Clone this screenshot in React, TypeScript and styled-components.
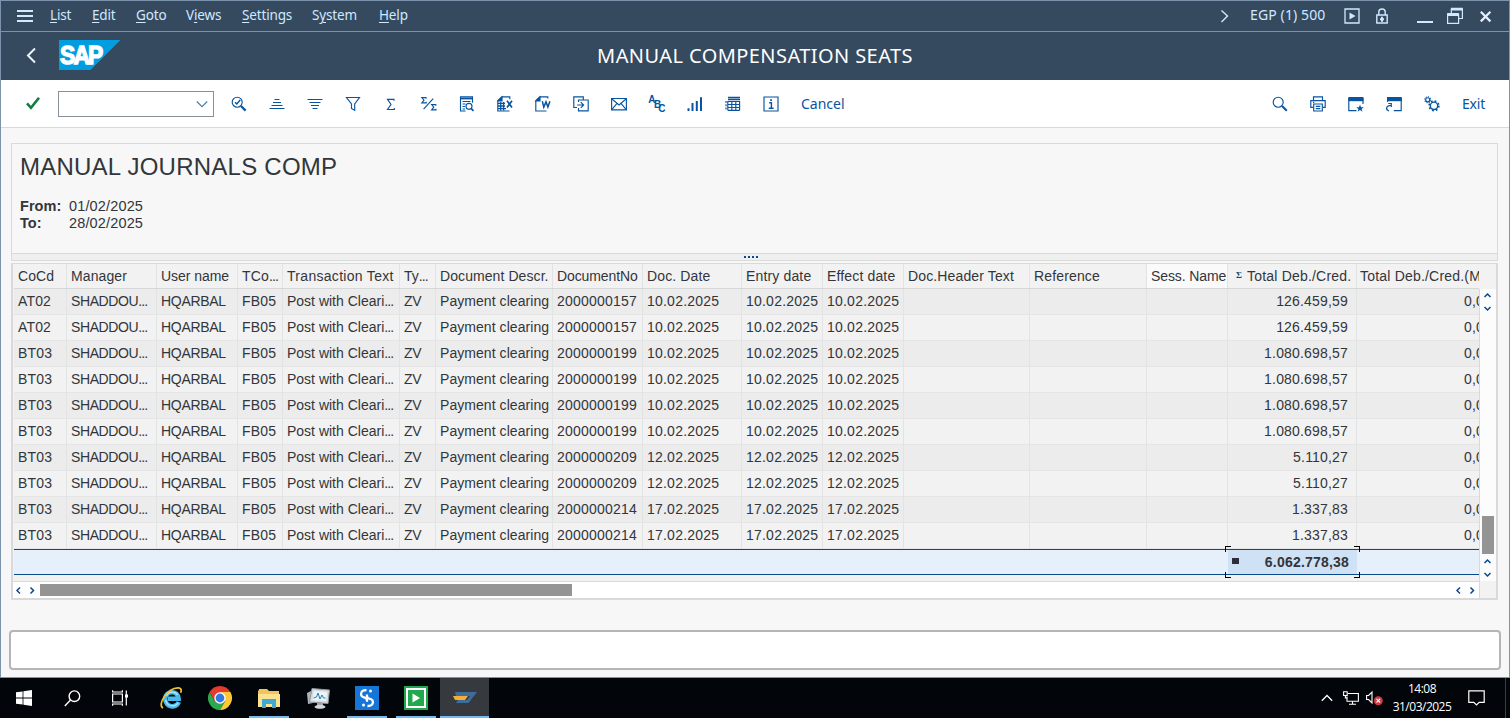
import React from 'react';
import styled, { createGlobalStyle, css } from 'styled-components';

const GlobalStyle = createGlobalStyle`
  * { box-sizing: border-box; }
  body { margin: 0; overflow: hidden; background: #f7f7f7; }
`;

const UI_FONT = `'Noto Sans', 'Open Sans', sans-serif`;
const GRID_FONT = `'Liberation Sans', Arial, sans-serif`;

const Screen = styled.div`
  width: 1510px;
  height: 718px;
  display: flex;
  flex-direction: column;
  font-family: ${UI_FONT};
`;

const Window = styled.div`
  height: 678px;
  display: flex;
  flex-direction: column;
  background: #f7f7f7;
  border: 1px solid #7b93ad;
`;

/* ---------- menu bar ---------- */

const MenuBar = styled.div`
  height: 31px;
  flex: none;
  display: flex;
  justify-content: space-between;
  background: #354a5f;
  border-bottom: 1px solid #7b93ad;
  color: #d1e8ff;
  font-size: 14px;
  line-height: 18px;
`;

const MenuLeft = styled.div`
  display: flex;
  align-items: center;
  padding: 0 0 2px 14px;
`;

const MenuItem = styled.span<{ $w: number; $ls?: number }>`
  width: ${(p) => p.$w}px;
  white-space: nowrap;
  font-size: 13.5px;
  letter-spacing: ${(p) => p.$ls ?? -0.15}px;
  u { text-underline-offset: 2px; text-decoration-thickness: 1px; }
`;

const MenuRight = styled.div`
  display: flex;
  align-items: center;
  padding: 0 14px 0 0;
`;

const SystemLabel = styled.span`
  width: 94px;
  margin-left: 19px;
  padding-bottom: 2px;
  letter-spacing: 0.12px;
  white-space: nowrap;
`;

const Glyph = styled.svg<{ $ml?: number }>`
  flex: none;
  display: block;
  overflow: visible;
  margin-left: ${(p) => p.$ml ?? 0}px;
`;

/* ---------- title bar ---------- */

const TitleBar = styled.div`
  height: 48px;
  flex: none;
  display: grid;
  grid-template-columns: 190px 1fr 190px;
  align-items: center;
  background: #354a5f;
`;

const Brand = styled.div`
  display: flex;
  align-items: center;
  padding: 0 0 2px 22px;
`;

const Title = styled.div`
  text-align: center;
  color: #fff;
  font-size: 20px;
  line-height: 26px;
  letter-spacing: 0.42px;
  white-space: nowrap;
`;

/* ---------- toolbar ---------- */

const Toolbar = styled.div`
  height: 48px;
  flex: none;
  display: flex;
  align-items: center;
  justify-content: space-between;
  background: #fff;
  border-bottom: 1px solid #d9d9d9;
  padding: 1px 24px 0 13px;
`;

const ToolGroup = styled.div`
  display: flex;
  align-items: center;
`;

const ToolButton = styled.button`
  width: 38px;
  height: 32px;
  padding: 0;
  border: 0;
  background: none;
  display: flex;
  align-items: center;
  justify-content: center;
`;

const TextButton = styled.button<{ $ls?: number; $ml?: number }>`
  border: 0;
  padding: 0;
  margin-left: ${(p) => p.$ml ?? 0}px;
  background: none;
  color: #0854a0;
  font: 14px/18px ${UI_FONT};
  letter-spacing: ${(p) => p.$ls ?? 0}px;
`;

const CommandField = styled.div`
  width: 156px;
  height: 26px;
  margin: 0 6px;
  border: 1px solid #89919a;
  background: #fff;
  display: flex;
  align-items: center;
  justify-content: flex-end;
  padding-right: 5px;
`;

/* ---------- content ---------- */

const Content = styled.main`
  flex: 1;
  display: flex;
  flex-direction: column;
  padding: 15px 8px 0 8px;
  font-family: ${GRID_FONT};
  color: #32363a;
`;

const Heading = styled.section`
  height: 111px;
  margin: 0 3px 0 2px;
  border: 1px solid #d9dbd9;
  padding: 8px 8px 0;
`;

const H1 = styled.h1`
  margin: 0;
  font-size: 24px;
  line-height: 30px;
  font-weight: 400;
  letter-spacing: 0.24px;
  white-space: nowrap;
`;

const Period = styled.dl`
  margin: 16px 0 0;
  display: grid;
  grid-template-columns: 49px 1fr;
  font-size: 14.5px;
  line-height: 17px;
  dt { font-weight: 700; letter-spacing: 0.05px; }
  dd { margin: 0; letter-spacing: 0.15px; }
`;

const Splitter = styled.div`
  height: 7px;
  margin: 0 3px 0 2px;
  background: #efefef;
  border: 1px solid #d9dbd9;
  border-top: 0;
  display: flex;
  justify-content: center;
  align-items: center;
  gap: 2px;
  padding-right: 8px;
`;

const Dot = styled.i`
  width: 2px;
  height: 2px;
  background: #0a4a8c;
`;

const Grid = styled.section`
  height: 337px;
  margin: 2px 3px 0 2px;
  border: 2px solid #d9d9d9;
  border-top-width: 1px;
  display: flex;
  flex-direction: column;
  background: #f2f2f2;
  font-size: 14px;
`;

const GridMain = styled.div`
  height: 317px;
  flex: none;
  display: flex;
`;

const Table = styled.div`
  width: 1466px;
  flex: none;
  overflow: hidden;
  padding-left: 1px;
`;

const columnTracks = [53, 90, 81, 45, 117, 36, 117, 90, 99, 81, 81, 126, 117, 81, 129, 122];

const Row = styled.div<{ $head?: boolean; $odd?: boolean }>`
  display: grid;
  grid-template-columns: ${columnTracks.map((w) => `${w}px`).join(' ')};
  height: ${(p) => (p.$head ? 25 : 26)}px;
  line-height: 24px;
  background: ${(p) => (p.$odd ? '#ececec' : '#f2f2f2')};
  border-bottom: 1px solid ${(p) => (p.$head ? '#d5d8d6' : '#e5e5e5')};
`;

const Cell = styled.div<{ $right?: boolean; $num?: boolean; $light?: boolean; $last?: boolean; $ls?: number }>`
  min-width: 0;
  overflow: hidden;
  white-space: nowrap;
  padding-left: 4px;
  border-right: 1px solid #e2e4e3;
  letter-spacing: ${(p) => p.$ls ?? (p.$num ? 0.22 : 0)}px;
  ${(p) => p.$light && css`background: #fafafa;`}
  ${(p) => p.$right && css`text-align: right; padding: 0 8px 0 0; letter-spacing: 0.18px;`}
  ${(p) => p.$last && css`border-right: 0; padding-left: 3px;`}
`;

const Dots = styled.span`
  letter-spacing: -0.9px;
`;

const ClippedAmount = styled.div`
  overflow: hidden;
  white-space: nowrap;
  padding-left: 107px;
  letter-spacing: 0.2px;
`;

const SumMark = styled.span`
  display: inline-block;
  width: 11px;
  margin-left: 4px;
  font: 700 9px 'Liberation Serif', serif;
  color: #0a4a8c;
  vertical-align: 3px;
`;

const TotalRow = styled.div`
  height: 26px;
  display: grid;
  grid-template-columns: 1214px 129px 122px;
  background: #e5f0fa;
  border-top: 1px solid #0a4a8c;
  border-bottom: 1px solid #0a4a8c;
`;

const TotalCell = styled.div`
  grid-column: 2;
  position: relative;
  background: #cfe1f5;
  display: flex;
  justify-content: space-between;
  align-items: center;
  padding: 0 8px 1px 4px;
  font-weight: 700;
  letter-spacing: 0.2px;
`;

const TotalMark = styled.i`
  width: 7px;
  height: 6px;
  margin-bottom: 1px;
  background: #2c2f3a;
`;

const Corner = styled.i<{ $top?: boolean; $left?: boolean }>`
  position: absolute;
  width: 6px;
  height: 6px;
  ${(p) => (p.$top ? 'top: -4px; border-top: 1px solid #000;' : 'bottom: -4px; border-bottom: 1px solid #000;')}
  ${(p) => (p.$left ? 'left: -3px; border-left: 1px solid #000;' : 'right: -3px; border-right: 1px solid #000;')}
`;

const VScroll = styled.div`
  width: 17px;
  margin-top: 25px;
  background: #fcfcfc;
  border-left: 1px solid #d9d9d9;
  display: flex;
  flex-direction: column;
  align-items: center;
  padding-right: 1px;
`;

const VThumb = styled.div`
  width: 12px;
  height: 38px;
  flex: none;
  margin: 201px 0 1px;
  background: #949494;
`;

const HScroll = styled.div`
  height: 17px;
  width: 1467px;
  background: #fff;
  border-top: 1px solid #d9d9d9;
  border-right: 1px solid #d9d9d9;
  display: flex;
  align-items: center;
`;

const HThumb = styled.div`
  width: 532px;
  height: 12px;
  margin-left: 1px;
  margin-right: auto;
  background: #949494;
`;

const StatusBar = styled.div`
  height: 40px;
  margin-top: 30px;
  border: 2px solid #b5b5b5;
  border-radius: 4px;
  background: #fff;
`;

/* ---------- taskbar ---------- */

const Taskbar = styled.footer`
  height: 40px;
  flex: none;
  background: #020509;
  display: flex;
  justify-content: space-between;
  color: #fff;
`;

const TaskGroup = styled.div`
  display: flex;
`;

const TaskSlot = styled.div<{ $w: number; $open?: boolean; $active?: boolean }>`
  width: ${(p) => p.$w}px;
  height: 40px;
  display: flex;
  align-items: center;
  justify-content: center;
  background: ${(p) =>
    p.$active
      ? 'linear-gradient(#76b9ed, #76b9ed) bottom / 100% 2px no-repeat, #363a3e'
      : p.$open
        ? 'linear-gradient(#76b9ed, #76b9ed) bottom / 40px 2px no-repeat'
        : 'none'};
`;

const Tray = styled.div`
  display: flex;
  align-items: center;
  padding-right: 4px;
`;

const Clock = styled.div`
  width: 68px;
  margin-left: 5px;
  text-align: center;
  font: 12px/18px 'Open Sans', sans-serif;
  letter-spacing: -0.5px;
  padding-bottom: 1px;
`;

const TrayEnd = styled.div`
  width: 1px;
  height: 40px;
  margin-left: 20px;
  background: #3c4043;
`;

/* ---------- icons ---------- */

const Icon = ({ children, size = 16 }: { children: React.ReactNode; size?: number }) => (
  <Glyph width={size} height={size} viewBox="0 0 16 16" fill="none" stroke="#0854a0" strokeWidth="1.15">
    {children}
  </Glyph>
);

const icons: Record<string, React.ReactNode> = {
  detail: (
    <>
      <circle cx="6.2" cy="6.2" r="5" />
      <path d="M4 6.2l1.8 1.8 3.4-4" strokeWidth="1.4" />
      <path d="M10 10l4.6 4.6" strokeWidth="2.2" />
    </>
  ),
  ascending: <path d="M5.5 3.5h5M4 6.5h8M2.5 9.5h11M.5 12.5h15" />,
  descending: <path d="M.5 3.5h15M2.5 6.5h11M4 9.5h8M5.5 12.5h5" />,
  filter: <path d="M1.5 1.5h13L9.7 8v6.3l-3.2-1.8V8z" />,
  sum: <path d="M11 4.700V3.400H4.500L8 8.500l-3.500 5h6.800v-1.400" />,
  subtotal: (
    <>
      <path d="M5 2.8V1.6H.8L3 4.2.8 6.9H5.2V5.7M14.8 9.8V8.6h-4.2l2.2 2.6-2.2 2.7H15v-1.2" strokeWidth="1.1" />
      <path d="M2.6 13.2L12.2 2.6" />
    </>
  ),
  preview: (
    <>
      <path d="M6.5 15H1.5V.8h12v6M3.5 5.5h8M3.5 8h3M3.5 10.5h2.5M3.5 13h2.5" />
      <path d="M1.5 2.5h12" strokeWidth="1.8" />
      <circle cx="10" cy="10.3" r="3" />
      <path d="M12.2 12.6l2.3 2.3" strokeWidth="1.7" />
    </>
  ),
  excel: (
    <>
      <path d="M12.5 15H.8V4.8L4.8.8h8v2.5" />
      <path d="M1 5L5 1v4z" fill="#0854a0" />
      <path d="M1 7.3h7M1 10h7M1 12.7h8M3.7 6v8.5M6.6 6v8.5" strokeWidth="1.3" />
      <path d="M10 4.800l5 6.800M15 4.800l-5 6.800" strokeWidth="1.7" />
    </>
  ),
  word: (
    <>
      <path d="M11.5 15H.8V4.8L4.8.8h8v1.7" />
      <path d="M1 5L5 1v4z" fill="#0854a0" />
      <path d="M7.3 5.3l1.5 5.8 2.2-5.2 1.9 5.2 2-5.8" strokeWidth="1.5" />
    </>
  ),
  localFile: (
    <>
      <path d="M4 11.5H.8V.8h9.5v3.500M5.500 6V4h9.700v10.800H5.500v-2.700" />
      <path d="M4.200 9h6M7.800 6.200l2.800 2.800-2.800 2.800" />
    </>
  ),
  mail: (
    <>
      <path d="M.6 2.500h14.800v11.400H.6z" />
      <path d="M1 3l7 6 7-6M1 13.400l5-6M15 13.400l-5-6" />
    </>
  ),
  chart: <path d="M1.500 12.200V15M5.500 7v8M9.800 5v10M14 1.200V15" strokeWidth="2" />,
  layout: (
    <>
      <path d="M2.800 5.500h12M2.800 8.500h12M2.800 11.500h12M2.800 14.300h12M2.800 5v9.300M6.800 5v9.300M10.800 5v9.300M14.600 5v9.300" />
      <path d="M3 1.500h12M3 3.500h12" strokeWidth="1.300" />
      <path d="M1 5v10" strokeDasharray="2 1.300" />
    </>
  ),
  info: (
    <>
      <path d="M1 1h14v14H1z" />
      <path d="M6.200 6.800h2.200v5M5.800 12.200h4.800" strokeWidth="1.400" />
      <path d="M7.200 3.200h1.700v1.700H7.200z" fill="#0854a0" stroke="none" />
    </>
  ),
  search: (
    <>
      <circle cx="6.200" cy="6.200" r="5" />
      <path d="M10 10l4.800 4.800" strokeWidth="2" />
    </>
  ),
  print: (
    <path d="M3.500 4.300V.8h9v3.500M3 11.300H.8V4.600h14.400v6.700H13M3.700 8h8.600v7H3.700zM5.800 10.300h4.500M5.800 12.600h4.500M3 6.400h1.300" />
  ),
  newSession: (
    <>
      <path d="M8.500 14.600H.8V2M15 2v6" />
      <path d="M.4 1h15v4.200H.4z" fill="#0854a0" stroke="none" />
      <path d="M12 8.600l1 2.700h2.800l-2.200 1.700.8 2.700-2.400-1.600-2.400 1.600.8-2.700-2.200-1.700H11z" fill="#0854a0" stroke="none" />
    </>
  ),
  shortcut: (
    <>
      <path d="M1.600 6V2M15.200 2v12.600H7.800" />
      <path d="M1 1h14.800v4.200H1z" fill="#0854a0" stroke="none" />
      <path d="M3 15C-1 13.500.2 9.300 5 9.300M2.300 7.500h3v3.600" />
    </>
  ),
  settings: (
    <>
      <circle cx="3.700" cy="3.700" r="2" />
      <circle cx="3.700" cy="3.700" r="2.900" strokeDasharray="1.100 1.150" />
      <circle cx="10" cy="9.800" r="3.700" strokeWidth="1.400" />
      <circle cx="10" cy="9.800" r="4.900" strokeDasharray="1.800 2.050" strokeWidth="1.600" />
    </>
  ),
};

const Spelling = () => (
  <Glyph width="16" height="16" viewBox="0 0 16 16" fill="#0854a0" fontFamily="Liberation Sans, sans-serif" fontSize="10" fontWeight="700">
    <text x="-.8" y="7">A</text>
    <text x="5" y="11.500">B</text>
    <text x="9.300" y="16">C</text>
  </Glyph>
);

const Chevron = ({ d }: { d: 'up' | 'down' | 'left' | 'right' }) => {
  const paths = { up: 'M3.5 8l3-3 3 3', down: 'M3.5 5l3 3 3-3', left: 'M7 3.5l-3 3 3 3', right: 'M4.500 3.500l3 3-3 3' };
  return (
    <Glyph width="13" height="13" viewBox="0 0 13 13" fill="none" stroke="#0a4a8c" strokeWidth="1.5">
      <path d={paths[d]} />
    </Glyph>
  );
};

const SapLogo = () => (
  <Glyph $ml={22} width="62" height="30" viewBox="0 0 62 30">
    <path d="M0 0h61.500L31.500 30H0z" fill="#009de0" />
    <text x="1" y="23.700" fill="#fff" stroke="#fff" strokeWidth="1.400" fontFamily="Liberation Sans, sans-serif" fontWeight="700" fontSize="25.500" letterSpacing="-2" textLength="41.500" lengthAdjust="spacingAndGlyphs">
      SAP
    </text>
  </Glyph>
);

/* ---------- data ---------- */

const headers: [string, number, boolean?][] = [
  ['CoCd', 0.1], ['Manager', 0.1], ['User name', -0.05], ['TCo', 0.15, true], ['Transaction Text', 0.3],
  ['Ty', 0, true], ['Document Descr.', 0.08], ['DocumentNo', -0.1], ['Doc. Date', 0.12], ['Entry date', 0.15],
  ['Effect date', 0.15], ['Doc.Header Text', 0.13], ['Reference', 0.15], ['Sess. Name', -0.1],
];

type Entry = [string, string, string, string];

const entries: Entry[] = [
  ['AT02', '2000000157', '10.02.2025', '126.459,59'],
  ['AT02', '2000000157', '10.02.2025', '126.459,59'],
  ['BT03', '2000000199', '10.02.2025', '1.080.698,57'],
  ['BT03', '2000000199', '10.02.2025', '1.080.698,57'],
  ['BT03', '2000000199', '10.02.2025', '1.080.698,57'],
  ['BT03', '2000000199', '10.02.2025', '1.080.698,57'],
  ['BT03', '2000000209', '12.02.2025', '5.110,27'],
  ['BT03', '2000000209', '12.02.2025', '5.110,27'],
  ['BT03', '2000000214', '17.02.2025', '1.337,83'],
  ['BT03', '2000000214', '17.02.2025', '1.337,83'],
];

const leftTools = ['detail', 'ascending', 'descending', 'filter', 'sum', 'subtotal', 'preview', 'excel', 'word', 'localFile', 'mail', 'spelling', 'chart', 'layout', 'info'];
const rightTools = ['search', 'print', 'newSession', 'shortcut', 'settings'];

const Tool = ({ name }: { name: string }) => (
  <ToolButton>{name === 'spelling' ? <Spelling /> : <Icon>{icons[name]}</Icon>}</ToolButton>
);

const EntryRow = ({ entry, odd }: { entry: Entry; odd: boolean }) => {
  const [company, doc, date, amount] = entry;
  return (
    <Row $odd={odd}>
      <Cell $ls={0.15}>{company}</Cell>
      <Cell $ls={-0.4}>SHADDOU<Dots>...</Dots></Cell>
      <Cell $ls={-0.3}>HQARBAL</Cell>
      <Cell $ls={0.15}>FB05</Cell>
      <Cell>Post with Cleari<Dots>...</Dots></Cell>
      <Cell $ls={-0.3}>ZV</Cell>
      <Cell $ls={0.06}>Payment clearing</Cell>
      <Cell $num>{doc}</Cell>
      <Cell $num>{date}</Cell>
      <Cell $num>{date}</Cell>
      <Cell $num>{date}</Cell>
      <Cell />
      <Cell />
      <Cell />
      <Cell $right $num>{amount}</Cell>
      <ClippedAmount>0,00</ClippedAmount>
    </Row>
  );
};

export default function App() {
  return (
    <Screen>
      <GlobalStyle />
      <Window>
        <MenuBar>
          <MenuLeft>
            <Glyph width="35" height="16" viewBox="0 0 35 16" stroke="#d1e8ff" strokeWidth="2">
              <path d="M2 4h16M2 9h16M2 14h16" />
            </Glyph>
            <MenuItem $w={42}><u>L</u>ist</MenuItem>
            <MenuItem $w={44}><u>E</u>dit</MenuItem>
            <MenuItem $w={50}><u>G</u>oto</MenuItem>
            <MenuItem $w={56}>V<u>i</u>ews</MenuItem>
            <MenuItem $w={70}><u>S</u>ettings</MenuItem>
            <MenuItem $w={67}>S<u>y</u>stem</MenuItem>
            <MenuItem $w={40}><u>H</u>elp</MenuItem>
          </MenuLeft>
          <MenuRight>
            <Glyph width="10" height="16" viewBox="0 0 10 16" fill="none" stroke="#d1e8ff" strokeWidth="1.4">
              <path d="M.5 2.500L6.500 8l-6 6" />
            </Glyph>
            <SystemLabel>EGP (1) 500</SystemLabel>
            <Glyph width="16" height="16" viewBox="0 0 16 16" fill="none" stroke="#d1e8ff" strokeWidth="1.3">
              <path d="M1 1h14v14H1z" />
              <path d="M5.500 4.500v7L11.500 8z" fill="#d1e8ff" stroke="none" />
            </Glyph>
            <Glyph $ml={15} width="14" height="17" viewBox="0 0 14 17" fill="none" stroke="#d1e8ff" strokeWidth="1.4">
              <path d="M1.800 7h10.400v8H1.800zM3.800 7V4c0-4 6.400-4 6.400 0v3" />
              <path d="M7 8.800v5M5 11.300h4" strokeWidth="2" />
            </Glyph>
            <Glyph $ml={28} width="16" height="16" viewBox="0 0 16 16" stroke="#d1e8ff" strokeWidth="2">
              <path d="M0 14h16" />
            </Glyph>
            <Glyph $ml={14} width="16" height="16" viewBox="0 0 16 16" fill="none" stroke="#d1e8ff" strokeWidth="1.2">
              <path d="M.6 6h11v9.400H.6zM4.300 6V1h11.100v9.500h-3.600" />
              <path d="M.2 6.500h11.600M4 1.200h11.800" strokeWidth="2.800" />
            </Glyph>
            <Glyph $ml={17} width="15" height="11" viewBox="0 0 15 11" stroke="#e2efff" strokeWidth="2.2">
              <path d="M.8.8l9.600 9.600M10.400.8L.8 10.400" />
            </Glyph>
          </MenuRight>
        </MenuBar>

        <TitleBar>
          <Brand>
            <Glyph width="14" height="18" viewBox="0 0 14 18" fill="none" stroke="#eaf4ff" strokeWidth="2">
              <path d="M12 2.500L5 9.500l7 7" />
            </Glyph>
            <SapLogo />
          </Brand>
          <Title>MANUAL COMPENSATION SEATS</Title>
        </TitleBar>

        <Toolbar>
          <ToolGroup>
            <ToolButton>
              <Glyph width="16" height="16" viewBox="0 0 16 16" fill="none" stroke="#107e3e" strokeWidth="2.6">
                <path d="M2 7.400l4 4.400L14 1.800" />
              </Glyph>
            </ToolButton>
            <CommandField>
              <Glyph width="12" height="8" viewBox="0 0 12 8" fill="none" stroke="#4d7fa8" strokeWidth="1.2">
                <path d="M.8 1.500L6 6.700l5.200-5.200" />
              </Glyph>
            </CommandField>
            {leftTools.map((n) => <Tool key={n} name={n} />)}
            <TextButton $ml={11}>Cancel</TextButton>
          </ToolGroup>
          <ToolGroup>
            {rightTools.map((n) => <Tool key={n} name={n} />)}
            <TextButton $ml={11} $ls={-0.2}>Exit</TextButton>
          </ToolGroup>
        </Toolbar>

        <Content>
          <Heading>
            <H1>MANUAL JOURNALS COMP</H1>
            <Period>
              <dt>From:</dt><dd>01/02/2025</dd>
              <dt>To:</dt><dd>28/02/2025</dd>
            </Period>
          </Heading>
          <Splitter><Dot /><Dot /><Dot /><Dot /></Splitter>

          <Grid>
            <GridMain>
              <Table>
                <Row $head>
                  {headers.map(([label, spacing, cut]) => (
                    <Cell key={label} $ls={spacing} $light={label === 'Sess. Name'}>
                      {label}{cut && <Dots>...</Dots>}
                    </Cell>
                  ))}
                  <Cell $ls={0.2}><SumMark>Σ</SumMark>Total Deb./Cred.</Cell>
                  <Cell $last $ls={0.2}>Total Deb./Cred.(M</Cell>
                </Row>
                {entries.map((e, i) => <EntryRow key={i} entry={e} odd={i % 2 === 0} />)}
                <TotalRow>
                  <TotalCell>
                    <TotalMark />
                    6.062.778,38
                    <Corner $top $left />
                    <Corner $top />
                    <Corner $left />
                    <Corner />
                  </TotalCell>
                </TotalRow>
              </Table>
              <VScroll>
                <Chevron d="up" />
                <Chevron d="down" />
                <VThumb />
                <Chevron d="up" />
                <Chevron d="down" />
              </VScroll>
            </GridMain>
            <HScroll>
              <Chevron d="left" />
              <Chevron d="right" />
              <HThumb />
              <Chevron d="left" />
              <Chevron d="right" />
            </HScroll>
          </Grid>

          <StatusBar />
        </Content>
      </Window>

      <Taskbar>
        <TaskGroup>
          <TaskSlot $w={48}>
            <Glyph width="16" height="16" viewBox="0 0 16 16" fill="#fff">
              <path d="M0 2.300l6.600-.9v6.200H0zM7.400 1.300L16 0v7.600H7.400zM0 8.400h6.600v6.200L0 13.700zM7.400 8.400H16V16l-8.600-1.300z" />
            </Glyph>
          </TaskSlot>
          <TaskSlot $w={48}>
            <Glyph width="17" height="17" viewBox="0 0 17 17" fill="none" stroke="#fff" strokeWidth="1.4">
              <circle cx="10.400" cy="6.200" r="5.300" />
              <path d="M6.500 10L.8 16" />
            </Glyph>
          </TaskSlot>
          <TaskSlot $w={50}>
            <Glyph width="18" height="16" viewBox="1 0 18 16" fill="none" stroke="#fff" strokeWidth="1.2">
              <path d="M1.600 4h9.800v8H1.600zM1.600 2V.3M11.400 2V.3M1 2h11M1.600 14v1.700M11.400 14v1.700M1 14h11M15.300.5v15" />
              <path d="M14 4.500h3v3h-3z" fill="#fff" stroke="none" />
            </Glyph>
          </TaskSlot>
          <TaskSlot $w={50}>
            <Glyph width="24" height="24" viewBox="0 0 24 24" fill="none">
              <path d="M19.800 16c-2.500 7-13.600 5.300-13.600-3.200C6.200 4.500 19.300 3.500 19.600 12.700H9" stroke="#4ab9ec" strokeWidth="4.600" />
              <path d="M19.300 16.500c-3 5-11.600 4.500-12.600-2.500M7.500 10c2-5 9-5 11-1" stroke="#b5ecff" strokeWidth="1.200" />
              <path d="M4 22C-2 19 8 2 19 1.800c4 0 3.500 3.500 2.500 5" stroke="#f4c430" strokeWidth="1.700" />
            </Glyph>
          </TaskSlot>
          <TaskSlot $w={48}>
            <Glyph width="24" height="24" viewBox="0 0 24 24">
              <path d="M1.600 6A12 12 0 0 0 12 24l5.200-9L12 12 6.800 15z" fill="#2ca94f" />
              <path d="M22.400 6A12 12 0 0 1 12 24l5.200-9L12 6z" fill="#fcc934" />
              <path d="M1.600 6L6.800 15 12 12V6h10.400A12 12 0 0 0 1.600 6z" fill="#e33b2e" />
              <circle cx="12" cy="12" r="5.700" fill="#fff" />
              <circle cx="12" cy="12" r="4.400" fill="#3478e5" />
            </Glyph>
          </TaskSlot>
          <TaskSlot $w={50} $open>
            <Glyph width="22" height="20" viewBox="0 0 22 20">
              <path d="M0 2.500h1V1h8l2 2h10v3h1v13H0z" fill="#f0c65a" />
              <path d="M0 6h22v13H0z" fill="#fbe192" />
              <path d="M4 20v-9h14v9h-4v-4H8v4z" fill="#3fa9d4" />
            </Glyph>
          </TaskSlot>
          <TaskSlot $w={48}>
            <Glyph width="24" height="22" viewBox="0 0 24 22">
              <path d="M1 6l6-3v13l-5 1z" fill="#aeb4ba" />
              <path d="M6 1.500L23.500 3 22 16.500 3.500 15z" fill="#d7dce0" stroke="#8d949b" />
              <path d="M8 4l13 1-1 9-13.500-1z" fill="#eaf6fb" />
              <path d="M7.500 11l3-1 1.500-4 2 6 2-4 1.500 3h2" fill="none" stroke="#2a7da8" />
              <path d="M11 16h6v3h-6z" fill="#9aa2a9" />
              <ellipse cx="14" cy="19.800" rx="5.500" ry="2" fill="#d2d6d9" />
            </Glyph>
          </TaskSlot>
          <TaskSlot $w={50} $open>
            <Glyph width="24" height="24" viewBox="0 0 24 24" fill="none">
              <path d="M0 0h24v24H0z" fill="#1676d8" />
              <path d="M11.500 4.200C5 4 4.500 10.500 9 11.300c2 .4 3 1 3 3v1.500M12.500 20c6.500.2 7-6.300 2.500-7.100-2-.4-3-1-3-3V8.500" stroke="#fff" strokeWidth="2.300" />
              <circle cx="15.500" cy="5" r="1.500" fill="#fff" />
              <circle cx="8.500" cy="19" r="1.500" fill="#fff" />
            </Glyph>
          </TaskSlot>
          <TaskSlot $w={48} $open>
            <Glyph width="24" height="24" viewBox="0 0 24 24">
              <path d="M0 0h24v24H0z" fill="#21a84c" />
              <path d="M3 3h18v18H3z" fill="none" stroke="#fff" strokeWidth="2" />
              <path d="M8.500 7.500v9L16 12z" fill="#fff" />
            </Glyph>
          </TaskSlot>
          <TaskSlot $w={49} $active>
            <Glyph width="24" height="12" viewBox="0 0 24 12">
              <path d="M2 0h22l-8.500 11H3l2-3h9l3-4H3z" fill="#3f6d99" />
              <path d="M0 4h15l-3 4H2z" fill="#f5ae32" />
            </Glyph>
          </TaskSlot>
        </TaskGroup>

        <Tray>
          <Glyph width="12" height="8" viewBox="0 0 12 8" fill="none" stroke="#fff" strokeWidth="1.3">
            <path d="M.8 6.800L6 1.500l5.200 5.300" />
          </Glyph>
          <Glyph $ml={10} width="16" height="14" viewBox="0 0 16 14" fill="none" stroke="#fff" strokeWidth="1.1">
            <path d="M5 2.500h10.400v7.800H4V5.500M9.500 10.300V13M6 13.300h7M.6.800h3.600v3.700H.6zM2.400 4.500V7H4" />
          </Glyph>
          <Glyph $ml={7} width="17" height="14" viewBox="0 0 17 14" fill="none" stroke="#fff" strokeWidth="1.1">
            <path d="M.6 4.500h2L6 1v11L2.600 8.500h-2z" />
            <circle cx="12.300" cy="9.700" r="4.500" fill="#d13a44" stroke="none" />
            <path d="M10.500 7.900l3.600 3.600M14.100 7.900l-3.600 3.600" />
          </Glyph>
          <Clock>14:08<br />31/03/2025</Clock>
          <Glyph $ml={12} width="17" height="16" viewBox="0 0 17 16" fill="none" stroke="#fff" strokeWidth="1.2">
            <path d="M.8.800h15.400v11.500h-5L8.500 15l-2.700-2.700h-5z" />
          </Glyph>
          <TrayEnd />
        </Tray>
      </Taskbar>
    </Screen>
  );
}
